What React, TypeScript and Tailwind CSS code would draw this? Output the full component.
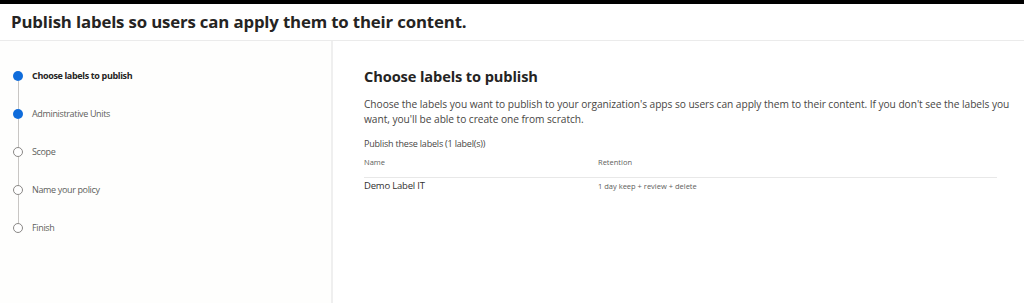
import React from "react";

const steps = [
  { label: "Choose labels to publish", done: true, current: true },
  { label: "Administrative Units", done: true },
  { label: "Scope" },
  { label: "Name your policy" },
  { label: "Finish" },
];

export default function App() {
  return (
    <div
      className="w-[1024px] h-[303px] flex flex-col bg-white overflow-hidden text-[#323130]"
      style={{ fontFamily: '"Open Sans", "Noto Sans", sans-serif' }}
    >
      <div className="h-[4px] bg-black shrink-0" />
      <div className="h-[37px] shrink-0 flex items-center pl-[11px] border-b border-[#ebebeb]">
        <h1 className="text-[16.8px] font-bold tracking-[-0.15px] text-[#252423]">
          Publish labels so users can apply them to their content.
        </h1>
      </div>
      <div className="flex flex-1 min-h-0">
        <div className="w-[333px] shrink-0 bg-[#fefefd] border-r-2 border-[#efefef] pt-[30px] pl-[13px]">
          {steps.map((s, i) => (
            <div key={s.label} className="flex">
              <div className="flex flex-col items-center w-[10px]">
                <div
                  className={
                    s.done
                      ? "w-[10px] h-[10px] rounded-full bg-[#0f6cdb] shrink-0"
                      : "w-[10px] h-[10px] rounded-full border-[1.5px] border-[#8a8886] bg-white shrink-0"
                  }
                />
                {i < steps.length - 1 && <div className="w-px h-[28px] bg-[#c8c6c4]" />}
              </div>
              <div
                className={
                  "ml-[9px] text-[9px] leading-[10px] tracking-[-0.35px] " +
                  (s.current ? "font-bold text-[#252423]" : "text-[#605e5c]")
                }
              >
                {s.label}
              </div>
            </div>
          ))}
        </div>
        <div className="flex-1 min-w-0 pl-[31px] pr-[27px] pt-[25px]">
          <h2 className="text-[14.6px] font-bold leading-[20px] tracking-[-0.1px] text-[#252423]">Choose labels to publish</h2>
          <p className="mt-[11px] w-[650px] text-[10.2px] leading-[15px] tracking-[-0.05px] text-[#484644]">
            Choose the labels you want to publish to your organization's apps so users can apply them to their content. If you don't see the labels you want, you'll be able to create one from scratch.
          </p>
          <div className="mt-[11px] text-[9px] leading-[12px] tracking-[-0.2px] text-[#484644]">Publish these labels (1 label(s))</div>
          <div className="mt-[7px] flex text-[7.5px] leading-[10px] text-[#605e5c] pb-[10px] border-b border-[#e8e8e8]">
            <div className="w-[234px]">Name</div>
            <div>Retention</div>
          </div>
          <div className="flex items-center pt-[1px]">
            <div className="w-[234px] text-[9.5px] font-medium tracking-[-0.2px] text-[#323130]">Demo Label IT</div>
            <div className="text-[7.5px] text-[#605e5c]">1 day keep + review + delete</div>
          </div>
        </div>
      </div>
    </div>
  );
}
